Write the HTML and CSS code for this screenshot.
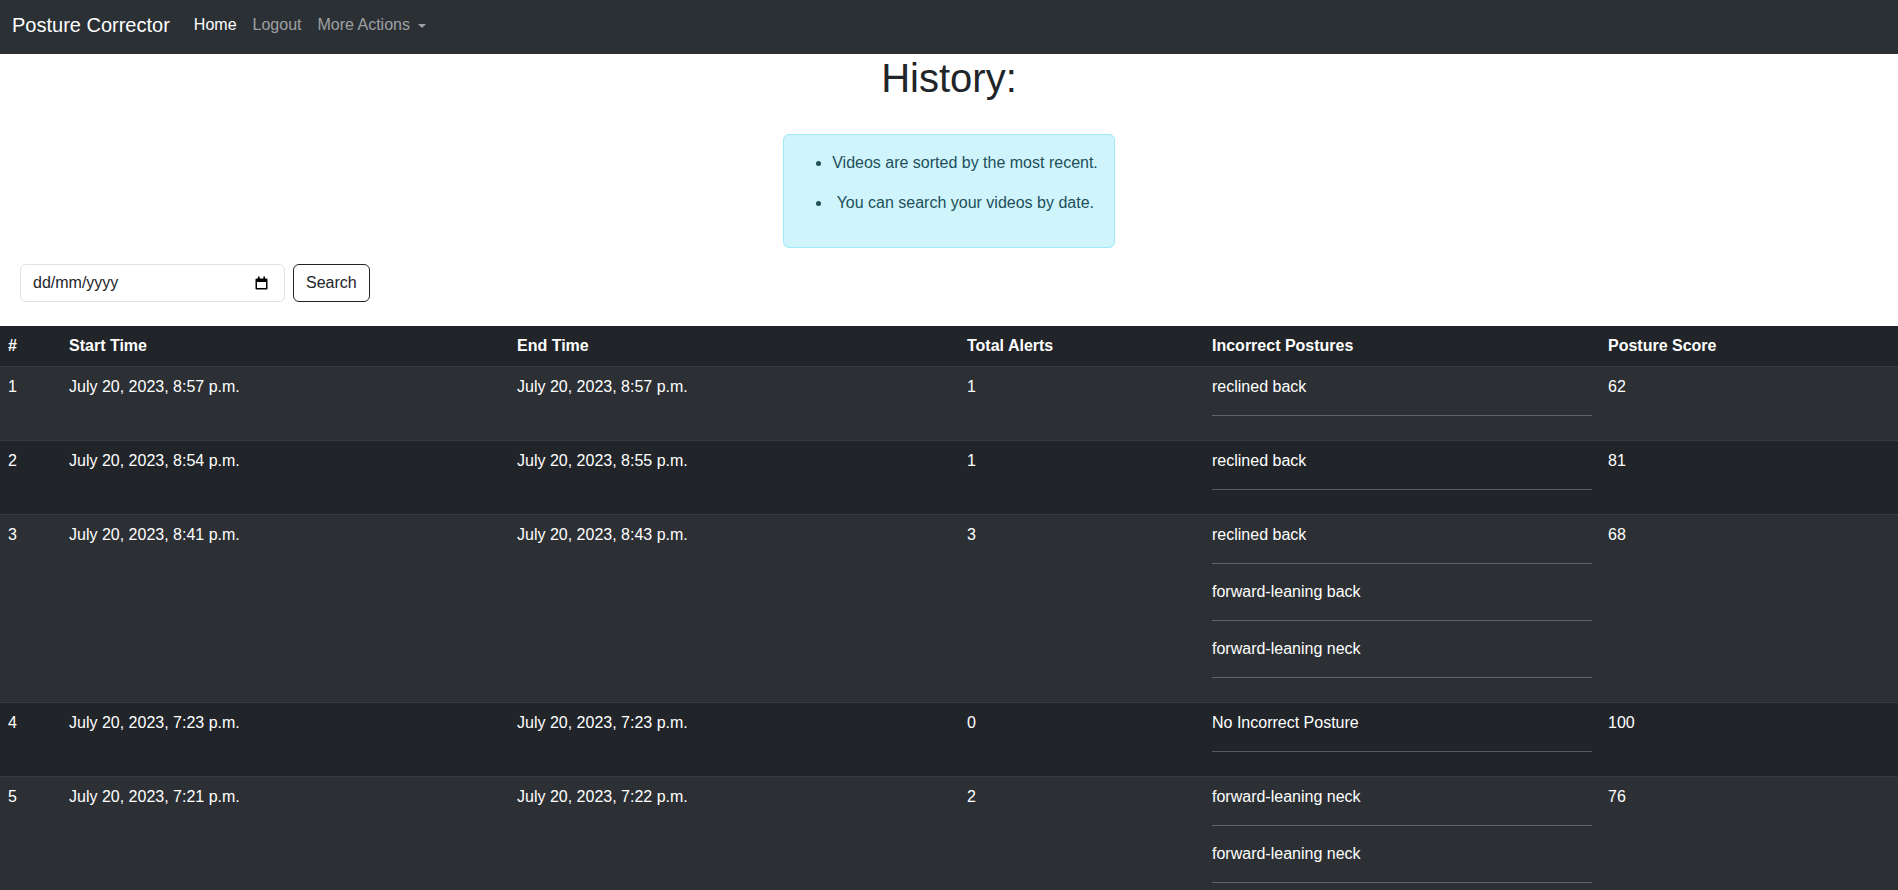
FILE: index.html
```html
<!DOCTYPE html>
<html lang="en">
<head>
<meta charset="utf-8">
<title>History - Posture Corrector</title>
<link rel="stylesheet" href="styles.css">
</head>
<body>
<nav class="navbar">
  <a class="brand" href="#">Posture Corrector</a>
  <ul class="nav">
    <li><a class="nav-link active" href="#">Home</a></li>
    <li><a class="nav-link" href="#">Logout</a></li>
    <li><a class="nav-link dropdown" href="#">More Actions<span class="caret"></span></a></li>
  </ul>
</nav>
<main>
  <h1 class="title">History:</h1>
  <div class="alert-wrap">
    <div class="alert">
      <ul>
        <li><p>Videos are sorted by the most recent.</p></li>
        <li><p>&nbsp;You can search your videos by date.</p></li>
      </ul>
    </div>
  </div>
  <form class="search">
    <div class="date-input">
      <input type="text" placeholder="dd/mm/yyyy">
      <svg class="cal" width="13" height="14" viewBox="0 0 13 14" aria-hidden="true">
        <path d="M1.5 2.5h10a1 1 0 0 1 1 1v9a1 1 0 0 1-1 1h-10a1 1 0 0 1-1-1v-9a1 1 0 0 1 1-1z M2 6v6h9V6z" fill="#000" fill-rule="evenodd"/>
        <rect x="3" y="0.5" width="1.6" height="2.5" fill="#000"/>
        <rect x="8.4" y="0.5" width="1.6" height="2.5" fill="#000"/>
      </svg>
    </div>
    <button type="button" class="btn">Search</button>
  </form>
  <table class="table">
    <colgroup>
      <col class="c-num"><col class="c-start"><col class="c-end"><col class="c-alerts"><col class="c-post"><col class="c-score">
    </colgroup>
    <thead>
      <tr><th>#</th><th>Start Time</th><th>End Time</th><th>Total Alerts</th><th>Incorrect Postures</th><th>Posture Score</th></tr>
    </thead>
    <tbody>
      <tr>
        <td>1</td><td>July 20, 2023, 8:57 p.m.</td><td>July 20, 2023, 8:57 p.m.</td><td>1</td>
        <td><p>reclined back</p><hr></td><td>62</td>
      </tr>
      <tr>
        <td>2</td><td>July 20, 2023, 8:54 p.m.</td><td>July 20, 2023, 8:55 p.m.</td><td>1</td>
        <td><p>reclined back</p><hr></td><td>81</td>
      </tr>
      <tr>
        <td>3</td><td>July 20, 2023, 8:41 p.m.</td><td>July 20, 2023, 8:43 p.m.</td><td>3</td>
        <td><p>reclined back</p><hr><p>forward-leaning back</p><hr><p>forward-leaning neck</p><hr></td><td>68</td>
      </tr>
      <tr>
        <td>4</td><td>July 20, 2023, 7:23 p.m.</td><td>July 20, 2023, 7:23 p.m.</td><td>0</td>
        <td><p>No Incorrect Posture</p><hr></td><td>100</td>
      </tr>
      <tr>
        <td>5</td><td>July 20, 2023, 7:21 p.m.</td><td>July 20, 2023, 7:22 p.m.</td><td>2</td>
        <td><p>forward-leaning neck</p><hr><p>forward-leaning neck</p><hr></td><td>76</td>
      </tr>
    </tbody>
  </table>
</main>
</body>
</html>
```

FILE: styles.css
```css
* { box-sizing: border-box; }

body {
  margin: 0;
  font-family: "Liberation Sans", Arial, sans-serif;
  font-size: 16px;
  line-height: 1.5;
  color: #212529;
  background: #fff;
}

.navbar {
  display: flex;
  align-items: center;
  height: 54px;
  padding: 0 12px 4px;
  background: #2b3035;
}

.brand {
  font-size: 20px;
  line-height: 30px;
  color: #fff;
  text-decoration: none;
  margin-right: 16px;
}

.nav {
  display: flex;
  list-style: none;
  margin: 0;
  padding: 0;
}

.nav-link {
  display: flex;
  align-items: center;
  padding: 8px;
  color: rgba(255, 255, 255, 0.55);
  text-decoration: none;
}

.nav-link.active { color: #fff; }

.caret {
  display: inline-block;
  margin-left: 8px;
  width: 0;
  height: 0;
  border-top: 4.8px solid rgba(255, 255, 255, 0.55);
  border-left: 4.2px solid transparent;
  border-right: 4.2px solid transparent;
  margin-top: 1px;
}

.title {
  margin: 0 0 32px;
  text-align: center;
  font-size: 40px;
  line-height: 48px;
  font-weight: 400;
}

.alert-wrap {
  display: flex;
  justify-content: center;
  margin-bottom: 16px;
}

.alert {
  background: #cff4fc;
  border: 1px solid #9eeaf9;
  border-radius: 6px;
  color: #204f5a;
  padding: 16px;
}

.alert ul {
  margin: 0;
  padding-left: 32px;
}

.alert p {
  margin: 0 0 16px;
}

.search {
  display: flex;
  gap: 8px;
  padding-left: 20px;
  margin: 0 0 24px;
}

.date-input {
  display: flex;
  align-items: center;
  width: 265px;
  height: 38px;
  border: 1px solid #dee2e6;
  border-radius: 6px;
  padding: 0 16px 0 12px;
  background: #fff;
}

.date-input input {
  flex: 1;
  min-width: 0;
  border: 0;
  outline: 0;
  padding: 0;
  font: inherit;
  color: #212529;
  background: transparent;
}

.date-input input::placeholder { color: #212529; opacity: 1; }

.cal { flex: none; }

.btn {
  height: 38px;
  padding: 0 12px;
  font: inherit;
  color: #212529;
  background: #fff;
  border: 1px solid #212529;
  border-radius: 6px;
}

.table {
  width: 100%;
  border-collapse: collapse;
  table-layout: fixed;
  background: #212529;
  color: #fff;
}

.c-num { width: 61px; }
.c-start { width: 448px; }
.c-end { width: 450px; }
.c-alerts { width: 245px; }
.c-post { width: 396px; }
.c-score { width: auto; }

.table th,
.table td {
  padding: 8px;
  text-align: left;
  vertical-align: top;
  border-bottom: 1px solid #373b3e;
}

.table th { font-weight: 700; }

.table tbody tr:nth-child(odd) td { background: #2c3034; }

.table td p { margin: 0 0 16px; }

.table td hr {
  margin: 16px 0;
  border: 0;
  border-top: 1px solid #fff;
  opacity: 0.25;
}
```
